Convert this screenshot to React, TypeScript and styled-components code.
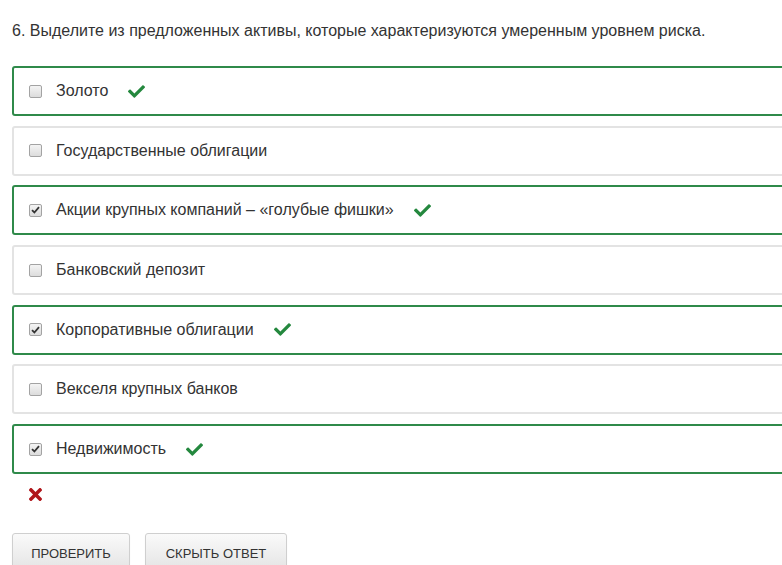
import React from "react";
import styled, { createGlobalStyle } from "styled-components";
import { FaCheck, FaTimes } from "react-icons/fa";

const Global = createGlobalStyle`
  html, body { margin: 0; padding: 0; background: #fff; overflow: hidden; }
  body { font-family: "Liberation Sans", Arial, sans-serif; color: #333; }
`;

const Page = styled.div`
  width: 782px;
  height: 565px;
  overflow: hidden;
  padding: 21px 0 0 12px;
  box-sizing: border-box;
`;

const Question = styled.div`
  font-size: 16px;
  line-height: 20px;
  color: #333;
  margin-bottom: 25px;
  white-space: nowrap;
`;

const List = styled.div`
  display: flex;
  flex-direction: column;
  gap: 9.7px;
  width: 800px;
`;

const Option = styled.label<{ $correct: boolean }>`
  display: flex;
  align-items: center;
  height: 50px;
  box-sizing: border-box;
  border: 2px solid ${(p) => (p.$correct ? "#2f8a4a" : "#e3e3e3")};
  border-radius: 3px;
  padding-left: 15px;
  font-size: 16px;
  color: #333;
`;

const Box = styled.span<{ $checked: boolean }>`
  width: 11px;
  height: 11px;
  border: 1px solid #a3a3a3;
  border-radius: 2px;
  background: linear-gradient(#f4f4f4, #dcdcdc);
  display: inline-flex;
  align-items: center;
  justify-content: center;
  margin-right: 14px;
  flex: none;
  svg { display: ${(p) => (p.$checked ? "block" : "none")}; }
`;

const Mark = styled.span`
  display: inline-flex;
  color: #24883e;
  margin-left: 20px;
  font-size: 17px;
`;

const Wrong = styled.div`
  color: #b0151a;
  font-size: 19px;
  display: flex;
  padding: 11px 0 0 14px;
  height: 22px;
`;

const Buttons = styled.div`
  display: flex;
  gap: 15px;
  margin-top: 26px;
`;

const Button = styled.button<{ $w: number }>`
  font-family: "Liberation Sans", Arial, sans-serif;
  font-size: 13px;
  color: #333;
  text-transform: uppercase;
  width: ${(p) => p.$w}px;
  height: 38px;
  padding: 2px 0 0;
  border: 1px solid #cfcfcf;
  border-radius: 3px;
  background: linear-gradient(#fafafa, #e4e4e4);
  box-shadow: 0 1px 1px rgba(0, 0, 0, 0.08);
  line-height: 36px;
  text-align: center;
`;

const options = [
  { text: "Золото", checked: false, correct: true },
  { text: "Государственные облигации", checked: false, correct: false },
  { text: "Акции крупных компаний – «голубые фишки»", checked: true, correct: true },
  { text: "Банковский депозит", checked: false, correct: false },
  { text: "Корпоративные облигации", checked: true, correct: true },
  { text: "Векселя крупных банков", checked: false, correct: false },
  { text: "Недвижимость", checked: true, correct: true },
];

export default function App() {
  return (
    <>
      <Global />
      <Page>
        <Question>
          6. Выделите из предложенных активы, которые характеризуются умеренным уровнем риска.
        </Question>
        <List>
          {options.map((o) => (
            <Option key={o.text} $correct={o.correct}>
              <Box $checked={o.checked}>
                <svg width="9" height="8" viewBox="0 0 9 8">
                  <path d="M1 4.2 L3.4 6.5 L8 1.2" stroke="#333" strokeWidth="1.8" fill="none" />
                </svg>
              </Box>
              {o.text}
              {o.correct && (
                <Mark>
                  <FaCheck />
                </Mark>
              )}
            </Option>
          ))}
        </List>
        <Wrong>
          <FaTimes />
        </Wrong>
        <Buttons>
          <Button $w={118}>Проверить</Button>
          <Button $w={142}>Скрыть ответ</Button>
        </Buttons>
      </Page>
    </>
  );
}
